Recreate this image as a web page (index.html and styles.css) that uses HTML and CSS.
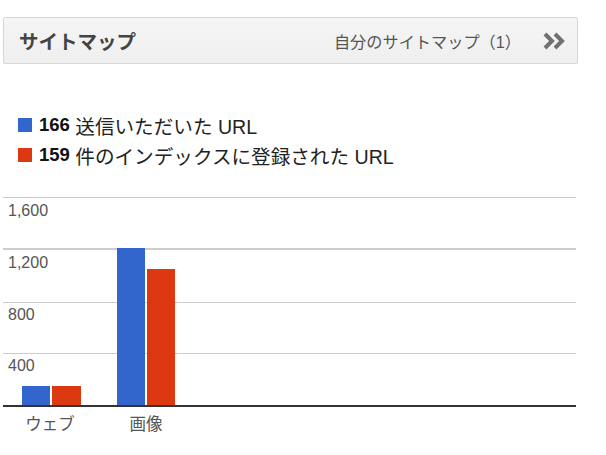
FILE: index.html
```html
<!DOCTYPE html>
<html lang="ja">
<head>
<meta charset="utf-8">
<link rel="stylesheet" href="styles.css">
</head>
<body>
<div class="header">
  <div class="title">サイトマップ</div>
  <div class="right">
    <span class="link">自分のサイトマップ（1）</span>
    <svg class="chev" width="24" height="18" viewBox="0 0 24 18">
      <polyline points="2,2 9,9 2,16" fill="none" stroke="#707070" stroke-width="4"/>
      <polyline points="12,2 19,9 12,16" fill="none" stroke="#707070" stroke-width="4"/>
    </svg>
  </div>
</div>
<div class="legend">
  <div class="item"><span class="sw blue"></span><b>166</b>&nbsp;送信いただいた URL</div>
  <div class="item"><span class="sw red"></span><b>159</b>&nbsp;件のインデックスに登録された URL</div>
</div>
<svg class="chart" width="606" height="250" viewBox="0 0 606 250">
  <rect x="3" y="7" width="573" height="1" fill="#cccccc"/>
  <rect x="3" y="58" width="573" height="2" fill="#cccccc"/>
  <rect x="3" y="112" width="573" height="1" fill="#cccccc"/>
  <rect x="3" y="163" width="573" height="1" fill="#cccccc"/>
  <g class="axis">
    <text x="8" y="26">1,600</text>
    <text x="8" y="78">1,200</text>
    <text x="8" y="130">800</text>
    <text x="8" y="181">400</text>
  </g>
  <rect x="22" y="196" width="28" height="19" fill="#3366cc"/>
  <rect x="52" y="196" width="29" height="19" fill="#dc3912"/>
  <rect x="117" y="58" width="28" height="157" fill="#3366cc"/>
  <rect x="147" y="79" width="28" height="136" fill="#dc3912"/>
  <rect x="3" y="215" width="573" height="2" fill="#333333"/>
  <g class="cat">
    <text x="50" y="240" text-anchor="middle">ウェブ</text>
    <text x="146" y="240" text-anchor="middle">画像</text>
  </g>
</svg>
</body>
</html>
```
FILE: styles.css
```css
body {
  margin: 0;
  font-family: "Liberation Sans", "Noto Sans CJK JP", sans-serif;
  background: #fff;
}
.header {
  margin: 17px 28px 0 3px;
  height: 45px;
  border: 1px solid #d6d6d6;
  border-radius: 2px;
  background: linear-gradient(#f5f5f5, #efefef);
  display: flex;
  align-items: center;
  justify-content: space-between;
  padding: 0 10px 0 15px;
}
.title {
  font-size: 19.5px;
  font-weight: bold;
  color: #444;
}
.right {
  display: flex;
  align-items: center;
  gap: 22px;
}
.link {
  font-size: 16.2px;
  color: #555;
}
.chev { display: block; }
.legend {
  margin-top: 46px;
  padding-left: 18px;
  font-size: 19.6px;
  color: #222;
}
.item {
  display: flex;
  align-items: center;
  height: 30px;
}
.item b { color: #111; font-size: 18.5px; }
.sw {
  width: 14px;
  height: 14px;
  margin-right: 7px;
}
.blue { background: #3366cc; }
.red { background: #dc3912; }
.chart {
  display: block;
  margin-top: 20px;
}
.axis text {
  font-family: "Liberation Sans", sans-serif;
  font-size: 16px;
  fill: #555;
}
.cat text {
  font-family: "Noto Sans CJK JP", sans-serif;
  font-size: 16.5px;
  fill: #555;
}
```
